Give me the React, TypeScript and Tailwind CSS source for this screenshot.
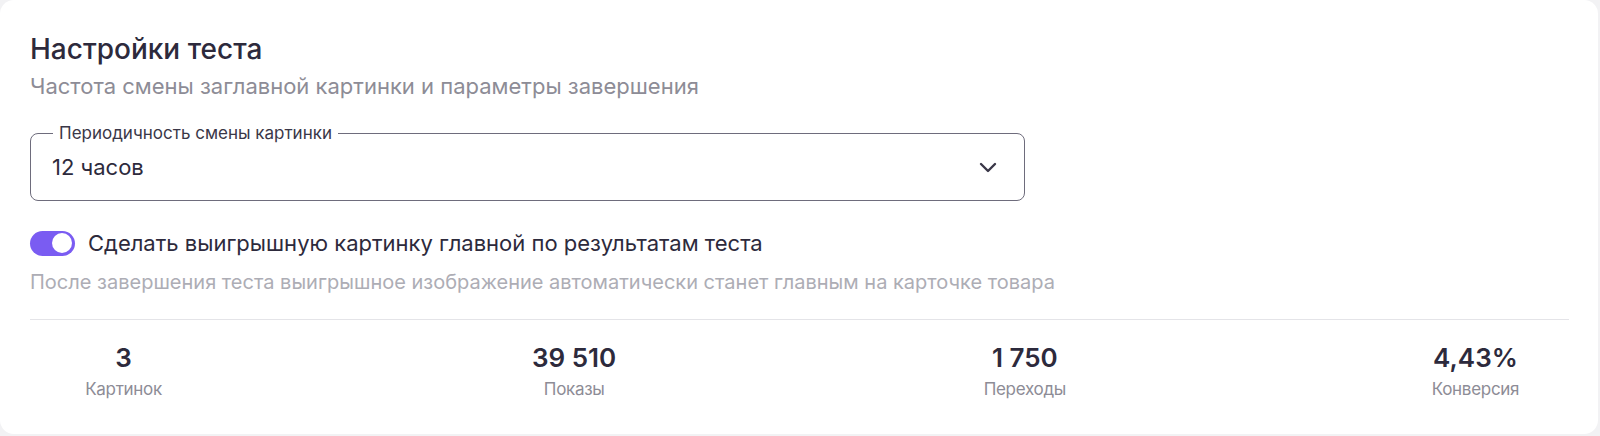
import React from "react";

function Chevron() {
  return (
    <svg width="24" height="24" viewBox="0 0 24 24" fill="none" stroke="#3a3748" strokeWidth="2.4" strokeLinecap="round" strokeLinejoin="round">
      <path d="M5 9l7 7 7-7" />
    </svg>
  );
}

const stats = [
  { v: "3", l: "Картинок" },
  { v: "39 510", l: "Показы" },
  { v: "1 750", l: "Переходы" },
  { v: "4,43%", l: "Конверсия" },
];

export default function App() {
  return (
    <div className="bg-[#f2f2f4] w-[1600px] h-[436px] font-['Inter',sans-serif]">
      <div className="bg-white rounded-[14px] h-[434px] w-[1598px] pl-[30px] pr-[29px] pt-[33px]">
        <h2 className="text-[28px] leading-[32px] font-medium text-[#2d2a3c]">Настройки теста</h2>
        <p className="mt-[7px] text-[22px] leading-[28px] text-[#8d8c96]">
          Частота смены заглавной картинки и параметры завершения
        </p>
        <div className="relative mt-[33px] w-[995px] h-[68px] border border-[#6e6c7c] rounded-[8px] flex items-center pl-[21px] pr-[24px]">
          <span className="absolute -top-[12px] left-[22px] px-[6px] bg-white text-[17px] leading-[22px] text-[#3a3748]">
            Периодичность смены картинки
          </span>
          <span className="flex-1 text-[22px] leading-[28px] text-[#2d2a3c]">12 часов</span>
          <Chevron />
        </div>
        <div className="mt-[28px] h-[28px] flex items-center gap-[13px]">
          <div className="w-[45px] h-[25px] rounded-full bg-[#7a5cf2] flex items-center justify-end pr-[3px]">
            <div className="w-[20px] h-[20px] rounded-full bg-white" />
          </div>
          <span className="text-[22px] leading-[28px] text-[#2d2a3c]">
            Сделать выигрышную картинку главной по результатам теста
          </span>
        </div>
        <p className="mt-[12px] text-[20px] leading-[26px] text-[#adadb5]">
          После завершения теста выигрышное изображение автоматически станет главным на карточке товара
        </p>
        <div className="mt-[24px] h-px bg-[#e4e4e8]" />
        <div className="mt-[22px] flex justify-between">
          {stats.map((s) => (
            <div key={s.l} className="w-[187px] flex flex-col items-center">
              <span className="text-[26px] leading-[32px] font-semibold text-[#2d2a3c]">{s.v}</span>
              <span className="mt-[4px] text-[17px] leading-[22px] tracking-[-0.3px] text-[#8d8c96]">{s.l}</span>
            </div>
          ))}
        </div>
      </div>
    </div>
  );
}
